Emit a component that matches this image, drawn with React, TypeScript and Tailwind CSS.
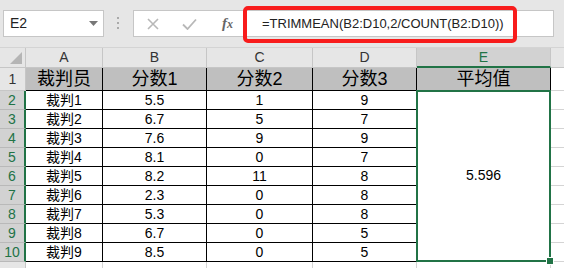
// Excel 截图：TRIMMEAN 示例
const rows = [
  { a: "裁判1", b: "5.5", c: "1", d: "9" },
  { a: "裁判2", b: "6.7", c: "5", d: "7" },
  { a: "裁判3", b: "7.6", c: "9", d: "9" },
  { a: "裁判4", b: "8.1", c: "0", d: "7" },
  { a: "裁判5", b: "8.2", c: "11", d: "8" },
  { a: "裁判6", b: "2.3", c: "0", d: "8" },
  { a: "裁判7", b: "5.3", c: "0", d: "8" },
  { a: "裁判8", b: "6.7", c: "0", d: "5" },
  { a: "裁判9", b: "8.5", c: "0", d: "5" },
];

const font = "font-['Liberation_Sans','Noto_Sans_CJK_SC',sans-serif]";

function Toolbar() {
  return (
    <div className="relative flex h-[47px] items-start">
      {/* 名称框 */}
      <div className="ml-[3px] mt-[10px] flex h-[27px] w-[101px] items-center justify-between border border-[#c6c6c6] bg-white pl-[6px] pr-[5px] text-[14px] text-[#222]">
        <span>E2</span>
        <svg width="9" height="5" viewBox="0 0 9 5">
          <path d="M0 0h9L4.5 5z" fill="#777" />
        </svg>
      </div>
      <div className="ml-[13px] mt-[17px] flex flex-col gap-[3px]">
        <span className="h-[2px] w-[2px] bg-[#aaa]" />
        <span className="h-[2px] w-[2px] bg-[#aaa]" />
        <span className="h-[2px] w-[2px] bg-[#aaa]" />
      </div>
      {/* 编辑栏 */}
      <div className="ml-[14px] mt-[10px] flex h-[27px] w-[421px] items-center border border-[#c6c6c6] bg-white">
        <svg className="ml-[13px]" width="12" height="12" viewBox="0 0 12 12">
          <path d="M1 1l10 10M11 1L1 11" stroke="#b8b8b8" strokeWidth="1.6" />
        </svg>
        <svg className="ml-[23px]" width="15" height="12" viewBox="0 0 15 12">
          <path d="M1 6.5l4.5 4.5L14 1.5" stroke="#b8b8b8" strokeWidth="1.8" fill="none" />
        </svg>
        <span className="ml-[25px] font-['Liberation_Serif',serif] text-[15px] font-bold italic text-[#666]">
          f<span className="text-[12px]">x</span>
        </span>
        <span className="ml-[29px] text-[13px] text-[#222]">
          =TRIMMEAN(B2:D10,2/COUNT(B2:D10))
        </span>
      </div>
      {/* 红框标注 */}
      <div className="absolute left-[243px] top-[6px] h-[37px] w-[274px] rounded-[5px] border-[4px] border-[#f81c1c]" />
    </div>
  );
}

function ColHead({ label, active }: { label: string; active?: boolean }) {
  return (
    <div
      className={`flex items-center justify-center border-r text-[14px] ${
        active
          ? "border-b-2 border-r-[#c6c6c6] border-b-[#217346] bg-[#d2d2d2] text-[#217346]"
          : "border-b border-r-[#c6c6c6] border-b-[#c6c6c6] text-[#333]"
      }`}
    >
      {label}
    </div>
  );
}

function Cell({ children, big }: { children?: React.ReactNode; big?: boolean }) {
  return (
    <div
      className={`flex items-center justify-center border-r border-b border-black ${
        big ? "bg-[#bfbfbf] text-[18px]" : "bg-white pt-px text-[14px]"
      } text-black`}
    >
      {children}
    </div>
  );
}

export default function App() {
  return (
    <div className={`h-[268px] w-[564px] overflow-hidden bg-[#e6e6e6] ${font}`}>
      <Toolbar />
      <div className="grid grid-cols-[26px_77px_104px_106px_104px_134px_13px] grid-rows-[20px_23px_repeat(9,19px)_19px] border-t border-[#d4d4d4]">
        {/* 列标 */}
        <div className="relative border-r border-b border-[#c6c6c6]">
          <svg className="absolute bottom-[3px] right-[3px]" width="12" height="12" viewBox="0 0 12 12">
            <path d="M12 0v12H0z" fill="#b5b5b5" />
          </svg>
        </div>
        <ColHead label="A" />
        <ColHead label="B" />
        <ColHead label="C" />
        <ColHead label="D" />
        <ColHead label="E" active />
        <div className="border-b border-[#c6c6c6]" />

        {/* 第1行 */}
        <div className="flex items-center justify-center border-r border-b border-[#c6c6c6] text-[14px] text-[#333]">
          1
        </div>
        <Cell big>裁判员</Cell>
        <Cell big>分数1</Cell>
        <Cell big>分数2</Cell>
        <Cell big>分数3</Cell>
        <Cell big>平均值</Cell>
        <div className="border-b border-[#d4d4d4] bg-white" />

        {rows.map((r, i) => (
          <div key={i} className="contents">
            <div className="col-start-1 flex items-center justify-center border-r-2 border-b border-r-[#217346] border-b-[#b9b9b9] bg-[#d2d2d2] text-[14px] text-[#217346]">
              {i + 2}
            </div>
            <Cell>{r.a}</Cell>
            <Cell>{r.b}</Cell>
            <Cell>{r.c}</Cell>
            <Cell>{r.d}</Cell>
            <div className="col-start-7 border-b border-[#d4d4d4] bg-white" />
          </div>
        ))}

        {/* 合并单元格 E2:E10 */}
        <div className="relative col-start-6 row-span-9 row-start-3 -ml-px -mt-px flex items-center justify-center border-2 border-[#217346] bg-white pb-[2px] text-[14px] text-black">
          5.596
          <span className="absolute -bottom-[5px] -right-[5px] h-[8px] w-[8px] border border-white bg-[#217346]" />
        </div>

        {/* 第11行 */}
        <div className="flex items-start justify-center border-r border-[#c6c6c6] pt-[1px] text-[14px] text-[#333]">
          11
        </div>
        <div className="border-r border-[#d4d4d4] bg-white" />
        <div className="border-r border-[#d4d4d4] bg-white" />
        <div className="border-r border-[#d4d4d4] bg-white" />
        <div className="border-r border-[#d4d4d4] bg-white" />
        <div className="border-r border-[#d4d4d4] bg-white" />
        <div className="bg-white" />
      </div>
    </div>
  );
}
